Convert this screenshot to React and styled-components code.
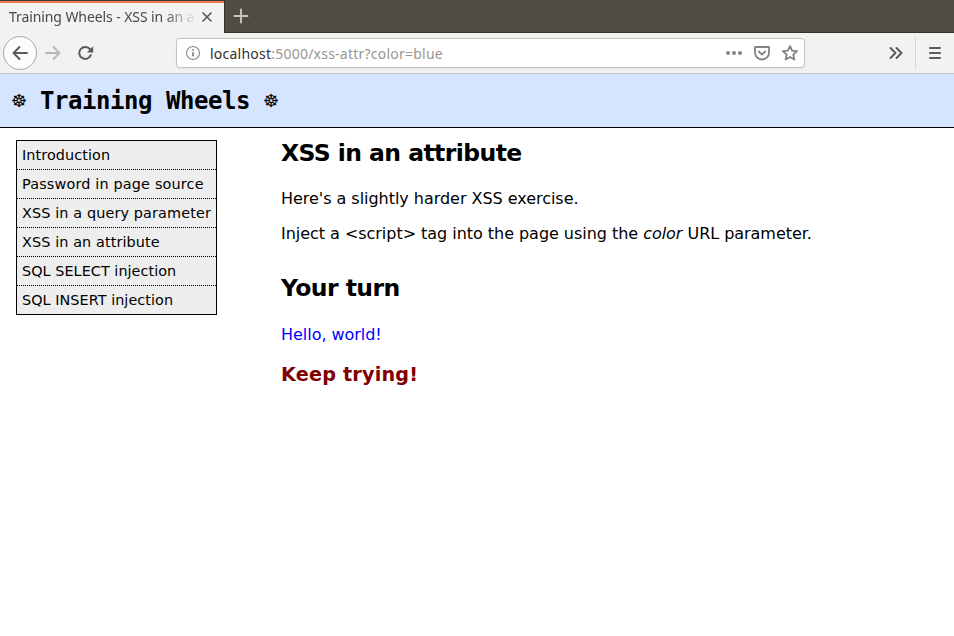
import React from "react";
import styled, { createGlobalStyle } from "styled-components";

const GlobalStyle = createGlobalStyle`
  * { box-sizing: border-box; }
  body { margin: 0; background: #fff; color: #000; overflow: hidden; }
`;

const Window = styled.div`
  width: 954px;
  height: 636px;
  font-family: "DejaVu Sans", sans-serif;
  font-size: 16px;
`;

const TabStrip = styled.div`
  display: flex;
  height: 33px;
  background: #504c44;
  border-bottom: 1px solid #35322d;
`;

const Tab = styled.div`
  display: flex;
  align-items: center;
  width: 224px;
  height: 33px;
  padding: 0 11px 0 9px;
  background: #f4f2f1;
  border-top: 1px solid #3c3933;
  box-shadow: inset 0 2px #ee7a53, 1px 0 #35322d;
`;

const TabTitle = styled.span`
  width: 187px;
  margin-right: 5px;
  overflow: hidden;
  white-space: nowrap;
  font: 14px/20px "Noto Sans", sans-serif;
  letter-spacing: -0.09px;
  color: #4a4846;
  mask-image: linear-gradient(to right, #000 155px, transparent 187px);
`;

const NewTab = styled.div`
  display: flex;
  align-items: center;
  padding-left: 9px;
`;

const Toolbar = styled.div`
  display: flex;
  align-items: center;
  height: 41px;
  padding-left: 3px;
  background: #f4f2f1;
  border-bottom: 1px solid #c8c5c1;
`;

const BackButton = styled.div`
  display: grid;
  place-items: center;
  width: 34px;
  height: 34px;
  border: 1px solid #aaa8a5;
  border-radius: 50%;
  background: #fcfcfc;
`;

const ToolIcon = styled.div`
  display: flex;
  margin-left: ${(p) => p.$gap}px;
`;

const UrlBar = styled.div`
  display: flex;
  align-items: center;
  width: 629px;
  height: 30px;
  margin-left: 82px;
  padding: 0 6px 0 8px;
  border: 1px solid #c6c2be;
  border-radius: 4px;
  background: #fff;
  box-shadow: 0 1px 3px rgba(0, 0, 0, 0.05);
`;

const Url = styled.span`
  flex: 1;
  margin-left: 9px;
  padding-top: 2px;
  font: 14px/20px "Noto Sans", sans-serif;
  letter-spacing: 0.23px;
  color: #989694;
`;

const Host = styled.span`
  color: #33312f;
`;

const Divider = styled.div`
  width: 1px;
  height: 34px;
  margin-left: 11px;
  background: #dad8d6;
`;

const Banner = styled.header`
  display: flex;
  align-items: center;
  height: 54px;
  padding-left: 11px;
  background: #d5e5ff;
  border-bottom: 1px solid #000;
`;

const BannerTitle = styled.h1`
  margin: 0 13px 0 14px;
  font: bold 24px/28px "DejaVu Sans Mono", monospace;
  letter-spacing: -0.449px;
`;

const Wheel = styled.span`
  width: 15px;
  font: 18px/28px "DejaVu Sans", sans-serif;
`;

const Body = styled.div`
  display: flex;
  align-items: flex-start;
  padding: 12px 0 0 16px;
`;

const Menu = styled.nav`
  width: 201px;
  border: 1px solid #000;
  background: #eee;
`;

const MenuItem = styled.a`
  display: block;
  height: 29px;
  padding-left: 5px;
  font-size: 14.4px;
  line-height: 28px;
  letter-spacing: ${(p) => p.$spacing}px;
  white-space: nowrap;

  &:not(:last-child) {
    border-bottom: 1px dotted #000;
  }
  &:last-child {
    height: 28px;
  }
`;

const Content = styled.main`
  margin-left: 64px;
`;

const Heading = styled.h2`
  margin: ${(p) => p.$top || 0}px 0 0;
  font-size: 23.5px;
  line-height: 27px;
  letter-spacing: -0.57px;
`;

const Paragraph = styled.p`
  margin: ${(p) => p.$top}px 0 0;
  line-height: 19px;
  letter-spacing: -0.035px;
  color: ${(p) => p.$color || "#000"};
`;

const Verdict = styled.h3`
  margin: 19px 0 0;
  font-size: 19.2px;
  line-height: 23px;
  letter-spacing: 0.2px;
  color: #800000;
`;

const Icon = ({ w = 16, h = 16, color = "#5c5a58", sw = 2, children }) => (
  <svg width={w} height={h} viewBox={`0 0 ${w} ${h}`} fill="none" stroke={color}
    strokeWidth={sw} strokeLinecap="round" strokeLinejoin="round">
    {children}
  </svg>
);

const pages = [
  { title: "Introduction", spacing: 0.08 },
  { title: "Password in page source", spacing: 0.17 },
  { title: "XSS in a query parameter", spacing: 0.13 },
  { title: "XSS in an attribute", spacing: 0.11 },
  { title: "SQL SELECT injection", spacing: 0.05 },
  { title: "SQL INSERT injection", spacing: 0.05 },
];

export default function App() {
  return (
    <Window>
      <GlobalStyle />
      <TabStrip>
        <Tab>
          <TabTitle>Training Wheels - XSS in an a</TabTitle>
          <Icon w={12} h={12} sw={1.7}><path d="M2 2l8 8M10 2l-8 8" /></Icon>
        </Tab>
        <NewTab>
          <Icon color="#c9c6c1" sw={1.9}><path d="M8 1.5v13M1.5 8h13" /></Icon>
        </NewTab>
      </TabStrip>
      <Toolbar>
        <BackButton>
          <Icon><path d="M15 8H1.5M7.5 2l-6 6 6 6" /></Icon>
        </BackButton>
        <ToolIcon $gap={8}>
          <Icon color="#bab8b6"><path d="M1 8h13.5M8.5 2l6 6-6 6" /></Icon>
        </ToolIcon>
        <ToolIcon $gap={17}>
          <Icon>
            <path d="M12.8 10.2A6 6 0 1 1 12 4.2" />
            <path d="M15.2 1.2v6.3H8.9z" fill="#5c5a58" stroke="none" />
          </Icon>
        </ToolIcon>
        <UrlBar>
          <Icon color="#8a8886" sw={1.1}>
            <circle cx="8" cy="8" r="6.5" />
            <path d="M8 7.3v4" strokeWidth="1.8" strokeLinecap="butt" />
            <circle cx="8" cy="5" r="1" fill="#8a8886" stroke="none" />
          </Icon>
          <Url><Host>localhost</Host>:5000/xss-attr?color=blue</Url>
          <Icon color="#858381">
            <g fill="#858381" stroke="none">
              <circle cx="2" cy="8" r="2" /><circle cx="8" cy="8" r="2" /><circle cx="14" cy="8" r="2" />
            </g>
          </Icon>
          <ToolIcon $gap={12}>
            <Icon color="#858381" sw={1.8}>
              <path d="M1 2h14v5.5a7 7 0 0 1-14 0z" />
              <path d="M4.8 6.5L8 9.5l3.2-3" />
            </Icon>
          </ToolIcon>
          <ToolIcon $gap={12}>
            <Icon color="#858381" sw={1.8}>
              <path d="M8 1l2.1 4.7 5 .5-3.8 3.4 1.1 5L8 12l-4.4 2.6 1.1-5L.9 6.2l5-.5z" />
            </Icon>
          </ToolIcon>
        </UrlBar>
        <ToolIcon $gap={83}>
          <Icon><path d="M2.5 3l5 5-5 5M8.5 3l5 5-5 5" /></Icon>
        </ToolIcon>
        <Divider />
        <ToolIcon $gap={11}>
          <Icon><path d="M3 3h10M3 8h10M3 13h10" /></Icon>
        </ToolIcon>
      </Toolbar>
      <Banner>
        <Wheel>☸</Wheel>
        <BannerTitle>Training Wheels</BannerTitle>
        <Wheel>☸</Wheel>
      </Banner>
      <Body>
        <Menu>
          {pages.map(({ title, spacing }) => (
            <MenuItem key={title} $spacing={spacing}>{title}</MenuItem>
          ))}
        </Menu>
        <Content>
          <Heading>XSS in an attribute</Heading>
          <Paragraph $top={22}>Here's a slightly harder XSS exercise.</Paragraph>
          <Paragraph $top={16}>
            Inject a &lt;script&gt; tag into the page using the <em>color</em> URL parameter.
          </Paragraph>
          <Heading $top={32}>Your turn</Heading>
          <Paragraph $top={23} $color="#0000ff">Hello, world!</Paragraph>
          <Verdict>Keep trying!</Verdict>
        </Content>
      </Body>
    </Window>
  );
}
